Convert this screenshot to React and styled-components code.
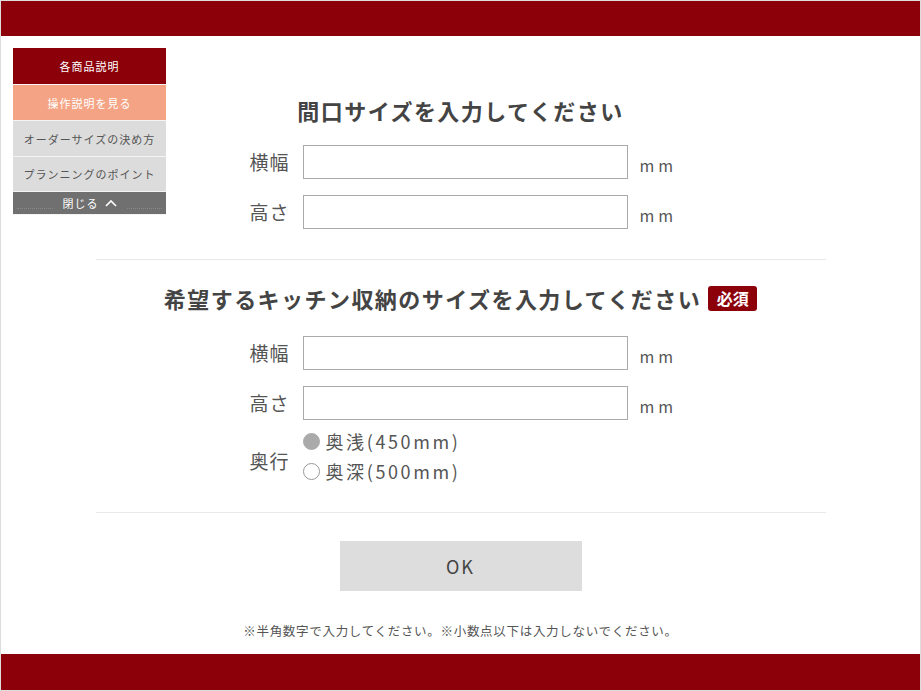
import React from "react";
import styled, { createGlobalStyle } from "styled-components";

const GlobalStyle = createGlobalStyle`
  html, body {
    margin: 0;
    padding: 0;
    background: #fff;
  }
  * {
    box-sizing: border-box;
  }
`;

const Frame = styled.div`
  position: relative;
  width: 921px;
  height: 691px;
  border: 1px solid #ddd;
  display: flex;
  flex-direction: column;
  font-family: "Noto Sans CJK JP", "Noto Sans", sans-serif;
  color: #444;
`;

const Bar = styled.div`
  height: ${(p) => p.h}px;
  background: #8b0009;
  flex-shrink: 0;
`;

const Main = styled.main`
  flex: 1;
  min-height: 0;
  overflow: hidden;
  display: flex;
  flex-direction: column;
  align-items: center;
  padding-top: 59px;
`;

const Title = styled.h2`
  margin: 0;
  font-size: 22px;
  line-height: 30px;
  font-weight: bold;
  letter-spacing: 1.45px;
  color: #444;
  display: flex;
  align-items: center;
  gap: 7px;
  white-space: nowrap;
`;

const Badge = styled.span`
  display: inline-flex;
  align-items: center;
  justify-content: center;
  width: 49px;
  height: 25px;
  border-radius: 3px;
  background: #8b0009;
  color: #fff;
  font-size: 16px;
  letter-spacing: 0;
`;

const Fields = styled.div`
  display: flex;
  flex-direction: column;
  gap: 16px;
  margin-top: ${(p) => p.top}px;
  padding-left: 4px;
`;

const Row = styled.div`
  display: grid;
  grid-template-columns: 41px 325px 36px;
  column-gap: 12px;
  align-items: ${(p) => (p.center ? "center" : "end")};
`;

const Label = styled.span`
  font-size: 19px;
  line-height: 34px;
  letter-spacing: 1px;
  white-space: nowrap;
  color: #555;
  align-self: center;
`;

const Input = styled.div`
  height: 34px;
  border: 1px solid #aaa;
  background: #fff;
`;

const Unit = styled.span`
  font-size: 16px;
  letter-spacing: 4px;
  line-height: 20px;
  white-space: nowrap;
  color: #555;
  margin-bottom: 4px;
`;

const Radios = styled.div`
  display: flex;
  flex-direction: column;
  margin-top: -10px;
`;

const RadioItem = styled.label`
  display: flex;
  align-items: center;
  gap: 6px;
  height: 30px;
  font-size: 18px;
  letter-spacing: 2.6px;
  color: #555;
  white-space: nowrap;
`;

const Dot = styled.span`
  width: 17px;
  height: 17px;
  border-radius: 50%;
  border: 1px solid ${(p) => (p.on ? "#aaa" : "#999")};
  background: ${(p) => (p.on ? "#aaa" : "#fff")};
  flex-shrink: 0;
`;

const Divider = styled.hr`
  width: 730px;
  border: 0;
  border-top: 1px solid #e8e8e8;
  margin: ${(p) => p.m};
`;

const OkButton = styled.button`
  width: 242px;
  height: 50px;
  border: 0;
  background: #ddd;
  color: #444;
  font-family: inherit;
  font-size: 18px;
  letter-spacing: 2px;
  margin-top: 28px;
  flex-shrink: 0;
`;

const Note = styled.p`
  margin: 30px 0 0;
  font-size: 12.5px;
  line-height: 20px;
  color: #555;
  letter-spacing: 0.7px;
  white-space: nowrap;
`;

const Menu = styled.nav`
  position: absolute;
  left: 12px;
  top: 47px;
  width: 153px;
  display: flex;
  flex-direction: column;
`;

const MenuItem = styled.div`
  height: ${(p) => p.h}px;
  display: flex;
  align-items: center;
  justify-content: center;
  gap: 6px;
  background: ${(p) => p.bg};
  color: ${(p) => p.fg};
  font-size: 11px;
  letter-spacing: 1px;
  border-bottom: 1px solid #f4f4f4;
`;

const Dots = styled.span`
  flex: 1;
  border-bottom: 1px dotted #999;
  margin: 10px 4px 0;
  opacity: 0.6;
`;

const menuItems = [
  { text: "各商品説明", bg: "#8b0009", fg: "#fff", h: 37 },
  { text: "操作説明を見る", bg: "#f4a484", fg: "#fff", h: 36 },
  { text: "オーダーサイズの決め方", bg: "#dcdcdc", fg: "#555", h: 36 },
  { text: "プランニングのポイント", bg: "#dcdcdc", fg: "#555", h: 35 },
];

function Field({ label }) {
  return (
    <Row>
      <Label>{label}</Label>
      <Input />
      <Unit>mm</Unit>
    </Row>
  );
}

export default function App() {
  return (
    <>
      <GlobalStyle />
      <Frame>
        <Bar h={35} />
        <Main>
          <Title>間口サイズを入力してください</Title>
          <Fields top={20}>
            <Field label="横幅" />
            <Field label="高さ" />
          </Fields>
          <Divider m="30px 0 23px" />
          <Title>
            希望するキッチン収納のサイズを入力してください
            <Badge>必須</Badge>
          </Title>
          <Fields top={23}>
            <Field label="横幅" />
            <Field label="高さ" />
            <Row center>
              <Label>奥行</Label>
              <Radios>
                <RadioItem>
                  <Dot on />
                  奥浅(450mm)
                </RadioItem>
                <RadioItem>
                  <Dot />
                  奥深(500mm)
                </RadioItem>
              </Radios>
            </Row>
          </Fields>
          <Divider m="26px 0 0" />
          <OkButton>OK</OkButton>
          <Note>※半角数字で入力してください。※小数点以下は入力しないでください。</Note>
        </Main>
        <Bar h={36} />
        <Menu>
          {menuItems.map((m) => (
            <MenuItem key={m.text} bg={m.bg} fg={m.fg} h={m.h}>
              {m.text}
            </MenuItem>
          ))}
          <MenuItem bg="#707070" fg="#fff" h={23}>
            <Dots />
            閉じる
            <svg width="12" height="8" viewBox="0 0 12 8" fill="none" stroke="#fff" strokeWidth="1.6">
              <path d="M1 7 L6 2 L11 7" />
            </svg>
            <Dots />
          </MenuItem>
        </Menu>
      </Frame>
    </>
  );
}
